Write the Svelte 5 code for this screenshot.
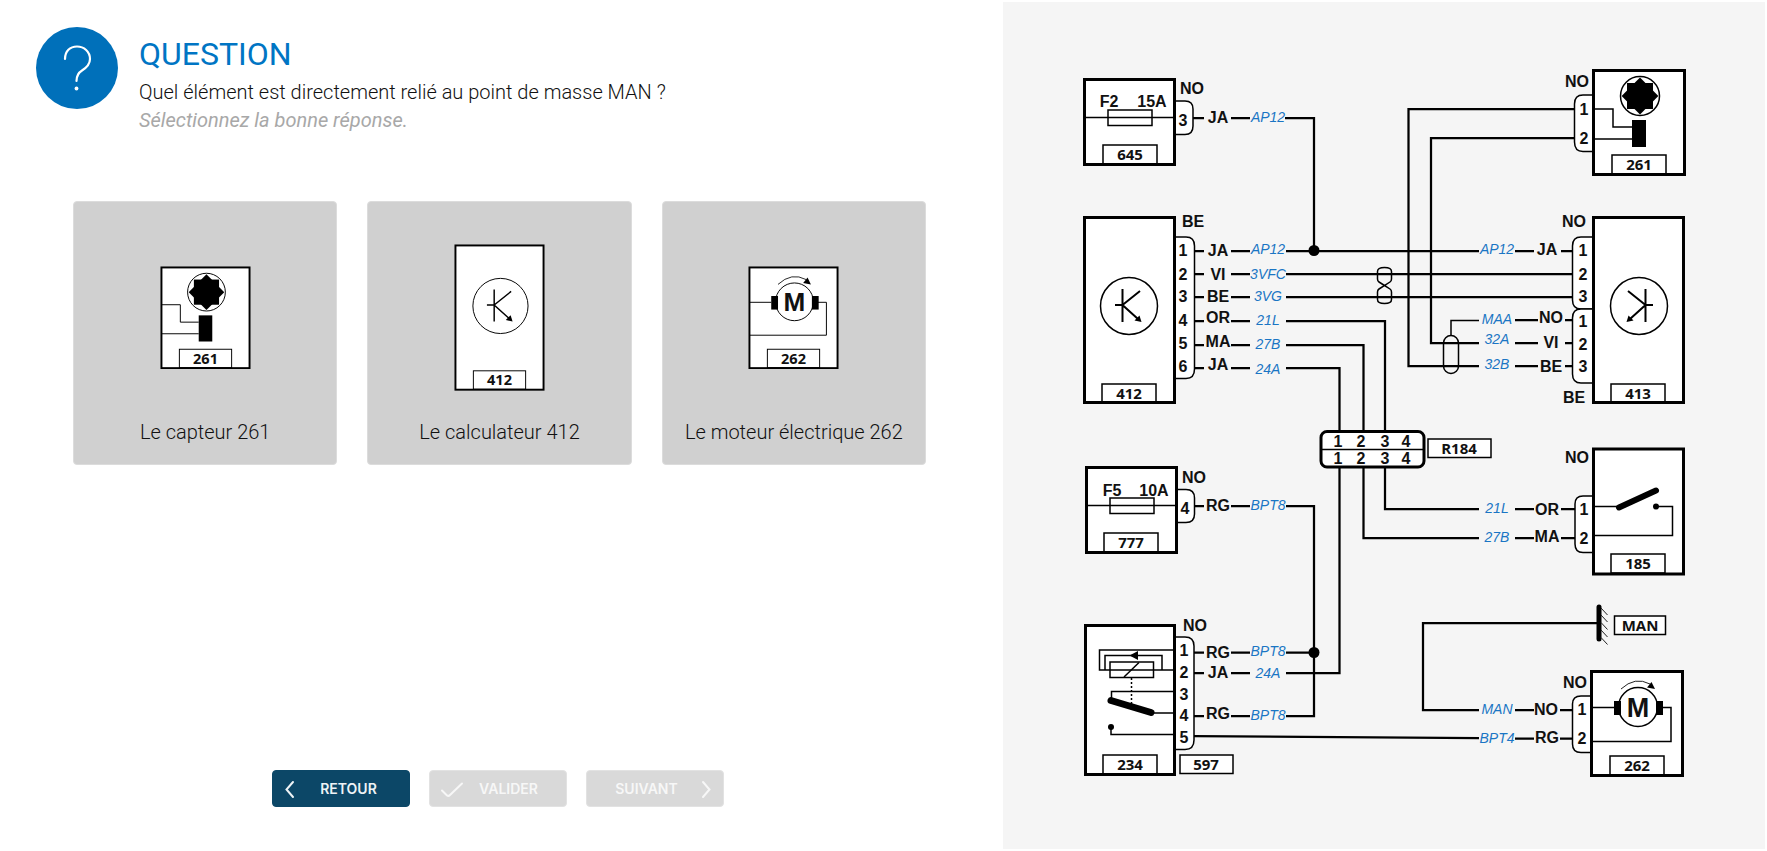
<script>
  const answers = [
    { id: '261', label: 'Le capteur 261' },
    { id: '412', label: 'Le calculateur 412' },
    { id: '262', label: 'Le moteur électrique 262' },
  ];
  let selected = $state(null);

  const wires = [
    // F2 feed
    'M1193 118H1204M1231 118H1250M1285 118H1314V251',
    // unit 412, pins 1 to 6
    'M1194 251H1204M1231 251H1250M1286 251H1479',
    'M1194 274H1204M1231 274H1250M1286 274H1573',
    'M1194 297H1204M1231 297H1250M1286 297H1573',
    'M1194 321H1204M1231 321H1250M1286 321H1385V431',
    'M1194 345H1204M1231 345H1250M1286 345H1363.5V431',
    'M1194 368H1204M1231 368H1250M1286 368H1339.5V431',
    // sensor 261 to unit 413
    'M1575 109H1408.5V366H1479',
    'M1575 138H1431V343H1479',
    'M1515 251H1534M1561 251H1573',
    'M1515 320H1538M1565 320H1573',
    'M1515 343H1538M1565 343H1573',
    'M1515 366H1538M1565 366H1573',
    // below splice R184
    'M1339.5 468V673H1286',
    'M1363.5 468V538H1479M1515 538H1534M1561 538H1575',
    'M1385 468V509H1479M1515 509H1534M1561 509H1575',
    // F5 feed and relay
    'M1195 506H1204M1231 506H1250M1286 506H1314V716H1286',
    'M1194 652.5H1204M1231 652.5H1250M1286 652.5H1314',
    'M1194 673H1204M1231 673H1250',
    'M1194 716H1204M1231 716H1250',
    'M1194 736L1479 738M1515 738.5H1534M1560 738.5H1573',
    // ground
    'M1597 623H1423V710H1479M1515 710H1534M1560 710H1573',
  ];

  // [x, baseline, text]
  const colours = [
    [1218, 123, 'JA'], [1218, 256, 'JA'], [1218, 280, 'VI'], [1218, 302, 'BE'],
    [1218, 323, 'OR'], [1218, 347, 'MA'], [1218, 370, 'JA'], [1218, 511, 'RG'],
    [1218, 658, 'RG'], [1218, 678, 'JA'], [1218, 719, 'RG'],
    [1547, 255, 'JA'], [1551, 323, 'NO'], [1551, 348, 'VI'], [1551, 372, 'BE'],
    [1547, 515, 'OR'], [1547, 542, 'MA'], [1546, 715, 'NO'], [1547, 743, 'RG'],
    [1192, 94, 'NO'], [1193, 227, 'BE'], [1194, 483, 'NO'], [1195, 631, 'NO'],
    [1577, 87, 'NO'], [1574, 227, 'NO'], [1574, 403, 'BE'], [1577, 463, 'NO'],
    [1575, 688, 'NO'],
  ];
  const signals = [
    [1268, 122, 'AP12'], [1268, 254, 'AP12'], [1268, 279, '3VFC'], [1268, 301, '3VG'],
    [1268, 325, '21L'], [1268, 349, '27B'], [1268, 374, '24A'], [1268, 510, 'BPT8'],
    [1268, 656, 'BPT8'], [1268, 678, '24A'], [1268, 720, 'BPT8'],
    [1497, 254, 'AP12'], [1497, 324, 'MAA'], [1497, 344, '32A'], [1497, 369, '32B'],
    [1497, 513, '21L'], [1497, 542, '27B'], [1497, 714, 'MAN'], [1497, 743, 'BPT4'],
  ];
  const pins = [
    [1183, 126, '3'], [1183, 256, '1'], [1183, 280, '2'], [1183, 302, '3'],
    [1183, 326, '4'], [1183, 349, '5'], [1183, 372, '6'], [1185, 514, '4'],
    [1184, 656, '1'], [1184, 678, '2'], [1184, 700, '3'], [1184, 721, '4'], [1184, 743, '5'],
    [1584, 115, '1'], [1584, 144, '2'], [1583, 256, '1'], [1583, 280, '2'], [1583, 302, '3'],
    [1583, 327, '1'], [1583, 350, '2'], [1583, 372, '3'], [1584, 515, '1'], [1584, 544, '2'],
    [1582, 715, '1'], [1582, 744, '2'],
    [1338, 447, '1'], [1361, 447, '2'], [1385, 447, '3'], [1406, 447, '4'],
    [1338, 464, '1'], [1361, 464, '2'], [1385, 464, '3'], [1406, 464, '4'],
  ];
  // outline of the connectors, right-hand and left-hand
  const sockets = [
    'M1175 101H1185Q1193 101 1193 109V126Q1193 134.5 1185 134.5H1175',
    'M1175 237H1186Q1194.5 237 1194.5 246V369Q1194.5 378.5 1186 378.5H1175',
    'M1176 489.5H1186Q1194.5 489.5 1194.5 498V514Q1194.5 522.5 1186 522.5H1176',
    'M1176 637H1185Q1194 637 1194 646V740Q1194 749.5 1185 749.5H1176',
    'M1593 95H1583Q1574.5 95 1574.5 104V142Q1574.5 151.5 1583 151.5H1593',
    'M1593 237H1581Q1572.5 237 1572.5 246V300Q1572.5 309 1581 309H1593',
    'M1593 309H1581Q1572.5 309 1572.5 318V374Q1572.5 383 1581 383H1593',
    'M1593 496H1583Q1575 496 1575 504V544Q1575 552.5 1583 552.5H1593',
    'M1592 696H1581Q1572.5 696 1572.5 704V744Q1572.5 752.5 1581 752.5H1592',
  ];
</script>

{#snippet tag(x, y, label, w = 54)}
  <rect class="thin" {x} {y} width={w} height="19" />
  <text class="id" x={x + w / 2} y={y + 15}>{label}</text>
{/snippet}

{#snippet box(x, y, w, h)}
  <rect class="frame" {x} {y} width={w} height={h} />
{/snippet}

{#snippet sensor()}
  {@render box(1.5, 1.5, 91, 104)}
  <circle class="thin" cx="48" cy="27" r="19.5" />
  <rect x="35" y="14" width="26" height="26" />
  <rect x="35" y="14" width="26" height="26" transform="rotate(45 48 27)" />
  <rect x="40" y="51" width="14" height="27" />
  <path class="inner" d="M2 40H21V58H40M2 70H40" />
  {@render tag(20, 86, '261')}
{/snippet}

{#snippet motor()}
  {@render box(1.5, 1.5, 91, 104)}
  <path class="inner" d="M2 37.5H24M72 37.5H81V71.5H2" />
  <rect x="24" y="31" width="7" height="14" />
  <rect x="66" y="31" width="7" height="14" />
  <circle class="thin" cx="48" cy="37" r="19.5" />
  <text class="motor" x="48" y="47">M</text>
  <path class="fine" d="M31 19Q45 6 60 14" />
  <path d="M65 19L57 17.5L61.500 12Z" />
  {@render tag(20, 86, '262')}
{/snippet}

{#snippet transistor(cx, cy)}
  <g class="transistor" transform="translate({cx} {cy})">
    <circle class="thin" r="28.5" />
    <path class="inner" d="M-6.500 -17V16M-14 -1H-6.500M11 -15L-6.500 -1L9 13" />
    <path d="M12.500 16L5.500 14.500L10.500 9.500Z" />
  </g>
{/snippet}

{#snippet fuse(x, y)}
  {@render box(x + 1.5, y + 1.5, 90, 85)}
  <path class="inner" d="M{x + 2} {y + 39.5}H{x + 91}" />
  <rect class="outline" x={x + 25} y={y + 32} width="44" height="15.5" />
{/snippet}

<main>
  <section class="quiz">
    <header>
      <svg class="badge" viewBox="0 0 82 82" aria-hidden="true">
        <circle cx="41" cy="41" r="41" fill="#0070ba" />
        <path
          d="M29 32C29 24 34 19.500 41 19.500S54 24.500 54 32C54 38 50 41 46 43.500C42 46 40.500 49 40.500 54"
          fill="none" stroke="#fff" stroke-width="2.200" stroke-linecap="round" />
        <circle cx="40.500" cy="61.500" r="1.900" fill="#fff" />
      </svg>
      <div class="heading">
        <h1>QUESTION</h1>
        <p class="question">Quel élément est directement relié au point de masse MAN ?</p>
        <p class="hint">Sélectionnez la bonne réponse.</p>
      </div>
    </header>

    <div class="answers">
      {#each answers as answer (answer.id)}
        <button
          type="button"
          class="answer"
          aria-pressed={selected === answer.id}
          onclick={() => (selected = answer.id)}
        >
          <span class="picture">
            {#if answer.id === '261'}
              <svg class="light" viewBox="0 0 94 107" aria-hidden="true">{@render sensor()}</svg>
            {:else if answer.id === '412'}
              <svg class="light" viewBox="0 0 94 152" aria-hidden="true">
                {@render box(1.5, 1.5, 91, 149)}
                {@render transistor(48, 64)}
                {@render tag(20, 131, '412')}
              </svg>
            {:else}
              <svg class="light" viewBox="0 0 94 107" aria-hidden="true">{@render motor()}</svg>
            {/if}
          </span>
          <span class="caption">{answer.label}</span>
        </button>
      {/each}
    </div>

    <nav>
      <button type="button" class="step">
        <svg viewBox="0 0 24 24" aria-hidden="true"><path d="M14 5L7.500 12.500L14 20" /></svg>
        <span>RETOUR</span>
      </button>
      <button type="button" class="step" disabled>
        <svg class="check" viewBox="0 0 30 24" aria-hidden="true"><path d="M6 13.500L11 18.500Q12.500 19.500 14 18L26 6.500" /></svg>
        <span>VALIDER</span>
      </button>
      <button type="button" class="step" disabled>
        <span>SUIVANT</span>
        <svg viewBox="0 0 24 24" aria-hidden="true"><path d="M10 5L16.500 12.500L10 20" /></svg>
      </button>
    </nav>
  </section>

  <section class="schema">
    <svg viewBox="1003 2 762 847" role="img" aria-label="Schéma électrique">
      {#each wires as d}<path class="wire" {d} />{/each}
      {#each sockets as d}<path class="socket" {d} />{/each}

      <circle cx="1314" cy="250.500" r="5.500" />
      <circle cx="1314" cy="652.500" r="5.500" />

      <!-- twisted pair and shielding -->
      <path class="outline" d="M1384.500 285.500L1379 282Q1377.500 281 1377.500 279V271.500Q1377.500 267.500 1384.500 267.500T1391.500 271.500V279Q1391.500 281 1390 282L1379 289Q1377.500 290 1377.500 292V299.500Q1377.500 303.500 1384.500 303.500T1391.500 299.500V292Q1391.500 290 1390 289Z" />
      <rect class="outline" x="1443.500" y="335.500" width="15" height="38" rx="7.500" />
      <path class="outline" d="M1479 320.500H1451V335" />

      {@render fuse(1083, 78)}
      <text class="label" x="1109" y="107">F2</text>
      <text class="label" x="1152" y="107">15A</text>
      {@render tag(1103, 145, '645')}

      {@render box(1084.5, 217.5, 90, 185)}
      {@render transistor(1129, 306)}
      {@render tag(1102, 384, '412')}

      {@render fuse(1085, 466)}
      <text class="label" x="1112" y="496">F5</text>
      <text class="label" x="1154" y="496">10A</text>
      {@render tag(1104, 533, '777')}

      <!-- relay -->
      {@render box(1085.5, 625.5, 89, 149)}
      <path class="inner" d="M1174 650H1099.500V670H1174M1105 670V655.500H1162V670" />
      <rect class="outline" x="1110" y="662" width="43.500" height="15.500" />
      <path class="inner" d="M1124 677L1139 662.500" />
      <path d="M1129.500 655.500L1138 651V660Z" />
      <path class="inner dashed" d="M1131.500 678V704" />
      <path class="inner" d="M1174 691.500H1111.500V700M1151 713H1174M1111 727V734.500H1174" />
      <path class="blade" d="M1111 700.500L1151 712.500" />
      <circle cx="1111" cy="727" r="3" />
      {@render tag(1103, 755, '234')}
      <rect class="outline filled" x="1180" y="755" width="53" height="18.500" />
      <text class="id" x="1206" y="770">597</text>

      <!-- splice -->
      <rect class="frame" x="1321" y="431.500" width="103" height="35.500" rx="6" />
      <path class="outline" d="M1322 449.500H1423" />
      <rect class="outline filled" x="1428" y="439" width="63" height="18.500" />
      <text class="id" x="1459" y="454">R184</text>

      <g transform="translate(1592 69)">{@render sensor()}</g>

      {@render box(1593.5, 217.5, 90, 185)}
      <g transform="translate(3278 0) scale(-1 1)">{@render transistor(1639, 306)}</g>
      {@render tag(1611, 384, '413')}

      {@render box(1593.5, 449, 90, 125)}
      <path class="inner" d="M1594 506.500H1618M1656 506.500H1672.500V535.500H1594" />
      <path class="blade short" d="M1619 507.500L1656 490.500" />
      <circle cx="1656" cy="506.500" r="3" />
      {@render tag(1611, 554, '185')}

      <!-- ground point -->
      <path class="ground" d="M1599 607V639" />
      <path class="fine" d="M1601 608L1607.500 615M1601 615L1607.500 622M1601 622.500L1607.500 629.500M1601 630L1607.500 637M1601 637.500L1607.500 644.500" />
      <rect class="outline filled" x="1614.500" y="616" width="51" height="18.500" />
      <text class="id" x="1640" y="631">MAN</text>

      <g transform="translate(1590 670)">{@render motor()}</g>

      {#each colours as [x, y, t]}<text class="label" {x} {y}>{t}</text>{/each}
      {#each signals as [x, y, t]}<text class="signal" {x} {y}>{t}</text>{/each}
      {#each pins as [x, y, t]}<text class="label" {x} {y}>{t}</text>{/each}
    </svg>
  </section>
</main>

<style>
  :global(body) {
    margin: 0;
    background: #fff;
  }

  main {
    display: grid;
    grid-template-columns: 1003fr 764fr;
    min-height: 100vh;
    font-family: Roboto, sans-serif;
  }

  .quiz {
    display: flex;
    flex-direction: column;
    min-width: 0;
    padding-bottom: 44px;
  }

  header {
    display: flex;
    gap: 21px;
    padding: 27px 36px 0;
  }

  .badge {
    flex: none;
    width: 82px;
    height: 82px;
  }

  .heading {
    padding-top: 9px;
  }

  h1 {
    margin: 0 0 6px;
    font-size: 32px;
    font-weight: 400;
    line-height: 36px;
    color: #0075c4;
  }

  p {
    margin: 0;
    font-size: 20px;
    font-weight: 300;
    line-height: 28px;
  }

  .question {
    color: #111;
  }

  .hint {
    font-weight: 400;
    font-style: italic;
    color: #a8a8a8;
  }

  .answers {
    display: grid;
    grid-template-columns: repeat(3, 1fr);
    gap: 30px;
    margin: 67px 77px 40px 73px;
  }

  .answer {
    display: flex;
    flex-direction: column;
    align-items: center;
    aspect-ratio: 1;
    padding: 0 0 19px;
    border: 1px solid #dcdcdc;
    border-radius: 4px;
    background: #d0d0d0;
    font: 300 20px/26px Roboto, sans-serif;
    color: #111;
    cursor: pointer;
  }

  .answer[aria-pressed='true'] {
    border-color: #0070ba;
  }

  .picture {
    display: flex;
    flex: 1;
    align-items: center;
    padding-top: 14px;
  }

  .picture svg {
    display: block;
    width: 91px;
  }

  nav {
    display: flex;
    justify-content: center;
    gap: 19px;
    margin-top: auto;
    padding-right: 8px;
  }

  .step {
    display: flex;
    align-items: center;
    width: 138px;
    height: 37px;
    padding: 0 6px;
    border: 1px solid #0c4767;
    border-radius: 4px;
    background: #0c4767;
    font: 600 14px/20px Inter, sans-serif;
    color: #eef3f6;
    cursor: pointer;
  }

  .step:disabled {
    border-color: #e2e2e2;
    background: #d9d9d9;
    color: #f7f7f7;
    cursor: default;
  }

  .step span {
    flex: 1;
    text-align: center;
  }

  .step span:last-child {
    padding-right: 8px;
  }

  .step span:first-child {
    padding-left: 8px;
  }

  .step svg {
    flex: none;
    width: 24px;
    height: 24px;
    fill: none;
    stroke: currentColor;
    stroke-width: 2;
    stroke-linecap: round;
  }

  .step .check {
    width: 30px;
  }

  .schema {
    margin: 2px 2px 2px 0;
    background: #f5f5f5;
  }

  .schema svg {
    display: block;
    width: 100%;
  }

  .frame {
    fill: #fff;
    stroke: #000;
    stroke-width: 3;
  }

  .thin,
  .inner,
  .outline {
    fill: none;
    stroke: #000;
    stroke-width: 1.5;
  }

  .transistor .inner {
    stroke-width: 2;
  }

  .filled {
    fill: #fff;
  }

  .fine {
    fill: none;
    stroke: #222;
    stroke-width: 1;
  }

  .light .frame {
    stroke-width: 2;
  }

  .light .thin,
  .light .inner {
    stroke-width: 1;
  }

  .light .transistor .inner {
    stroke-width: 1.5;
  }

  .wire {
    fill: none;
    stroke: #000;
    stroke-width: 2.25;
  }

  .socket {
    fill: #fff;
    stroke: #000;
    stroke-width: 1.5;
  }

  .dashed {
    stroke-dasharray: 2 2;
  }

  .blade,
  .ground {
    fill: none;
    stroke: #000;
    stroke-width: 7;
    stroke-linecap: round;
  }

  .short {
    stroke-width: 6;
  }

  .ground {
    stroke-width: 5;
  }

  text {
    text-anchor: middle;
    fill: #111;
  }

  .label {
    font: bold 16px 'Liberation Sans', sans-serif;
  }

  .signal {
    font: italic 14px 'Liberation Sans', sans-serif;
    fill: #1a75c4;
  }

  .id {
    font: bold 15px 'Open Sans', sans-serif;
  }

  .motor {
    font: bold 27px 'Liberation Sans', sans-serif;
  }
</style>
